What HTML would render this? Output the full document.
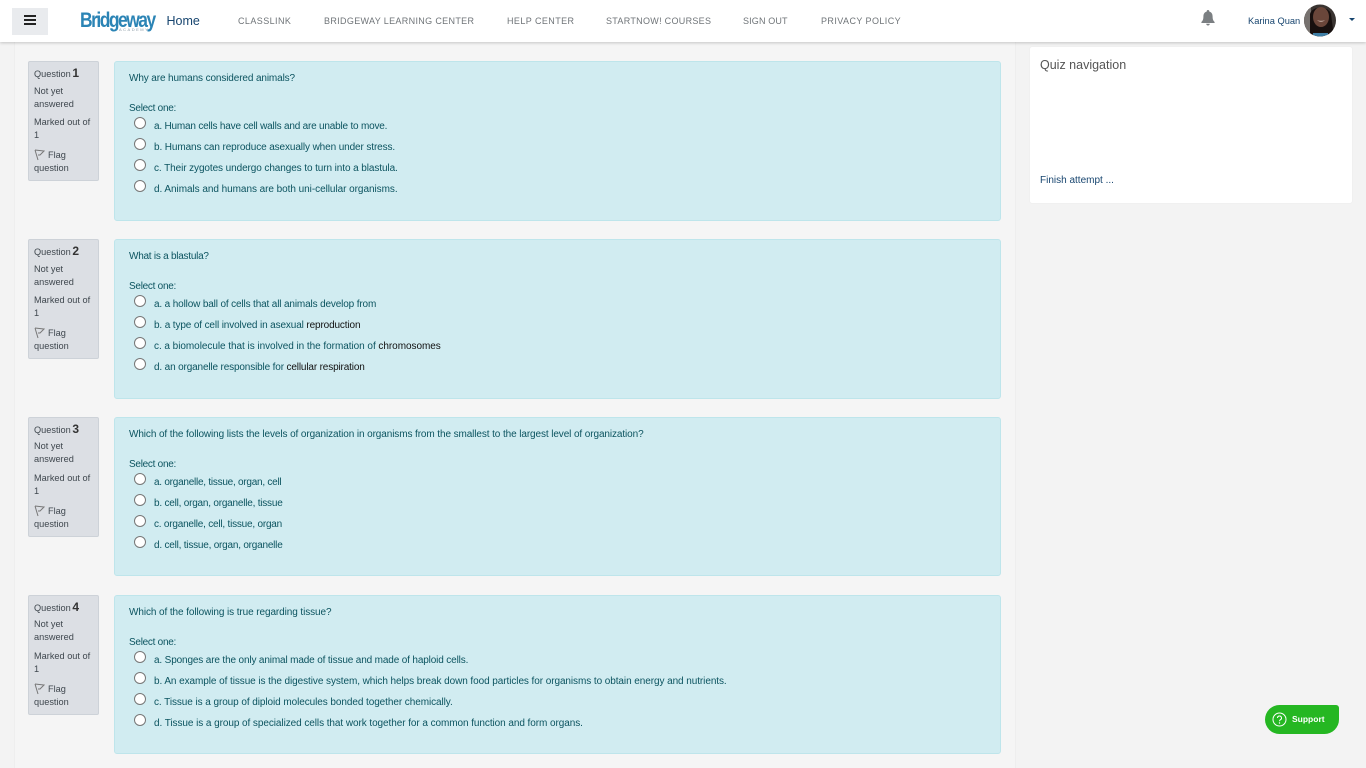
<!DOCTYPE html>
<html lang="en"><head><meta charset="utf-8"><title>Quiz</title>
<style>
html,body{margin:0;padding:0;width:1366px;height:768px;overflow:hidden;background:#f3f3f3;font-family:"Liberation Sans",sans-serif;}
.a,.t{position:absolute;white-space:nowrap}
.t{font-size:10px;letter-spacing:-.09px;line-height:14px;color:#0c5460;margin-top:3px}
.t span{color:#111}
.s{letter-spacing:-.27px}
.i{color:#3f474e;font-size:9.2px;line-height:13px;margin-top:1px}
.i b{font-size:12px;color:#333;margin-left:-1px}
.i i{font-style:normal;margin-left:14px}
.n{font-size:9px;letter-spacing:.42px;color:#6f7478;line-height:14px;top:14px}
.info{position:absolute;left:28px;width:69px;height:118px;background:#dcdfe4;border:1px solid #cdd2d8;border-radius:2px}
.box{position:absolute;left:114px;width:885px;background:#d1ecf1;border:1px solid #bee5eb;border-radius:3px}
.r{position:absolute;left:134px;width:10px;height:10px;border:1px solid #777;border-radius:50%;background:#fff;margin-top:-1px}
</style></head><body>
<div class="a" style="left:14px;top:42px;width:1000px;height:726px;background:#f5f5f5;border-left:1px solid #eeeeee;border-right:1px solid #eeeeee"></div>
<div class="a" style="left:0;top:0;width:1366px;height:42px;background:#fff;box-shadow:0 1px 3px rgba(0,0,0,.2)"></div>
<div class="a" style="left:12px;top:8px;width:36px;height:27px;background:#e9ebee"></div>
<div class="a" style="left:24px;top:15px;width:12px;height:2px;background:#222;box-shadow:0 4px 0 #222,0 8px 0 #222"></div>
<div class="a" style="left:80px;top:9px;font:bold 21px/24px 'Liberation Sans',sans-serif;color:#2b84b5;letter-spacing:-1.8px;transform-origin:0 0;transform:scaleX(.83)">Bridgeway</div>
<div class="a" style="left:119px;top:27px;font-size:4px;line-height:5px;letter-spacing:1.500px;color:#8a9aa5">ACADEMY</div>
<div class="a" style="left:166.500px;top:13px;font-size:12.500px;line-height:17px;color:#17456f">Home</div>
<div class="a n" style="left:238px">CLASSLINK</div>
<div class="a n" style="left:324px;letter-spacing:.34px">BRIDGEWAY LEARNING CENTER</div>
<div class="a n" style="left:507px">HELP CENTER</div>
<div class="a n" style="left:606px;letter-spacing:.3px">STARTNOW! COURSES</div>
<div class="a n" style="left:743px;letter-spacing:.15px">SIGN OUT</div>
<div class="a n" style="left:821px">PRIVACY POLICY</div>
<svg class="a" style="left:1201px;top:10px" width="14" height="16" viewBox="0 0 14 16"><path fill="#7b7f82" d="M7 0a1.3 1.3 0 0 1 1.3 1.6C10.6 2.2 11.6 4 11.6 6.5c0 3 .7 4.300 2 5.500V13H.4v-1c1.300-1.200 2-2.500 2-5.500 0-2.500 1-4.300 3.300-4.900A1.300 1.300 0 0 1 7 0zM5.200 13.800h3.600A1.900 1.900 0 0 1 7 15.500a1.900 1.900 0 0 1-1.800-1.700z"/></svg>
<div class="a" style="left:1248px;top:14px;font-size:9.300px;line-height:14px;color:#17456f">Karina Quan</div>
<svg class="a" style="left:1304px;top:4px" width="32" height="33" viewBox="0 0 32 33"><defs><clipPath id="c"><circle cx="16" cy="16.500" r="16"/></clipPath></defs><g clip-path="url(#c)"><rect width="32" height="33" fill="#3a3431"/><rect x="0" y="0" width="7" height="33" fill="#77726f"/><path d="M6 33V10C8 2 24 1 27 10L30 33z" fill="#17100f"/><ellipse cx="17" cy="13" rx="8" ry="10" fill="#6a463a"/><path d="M13 16q4 4 8 0q-4 1.500-8 0z" fill="#b39a90"/><rect x="9" y="29" width="15" height="4" fill="#3f7fa6"/></g></svg>
<div class="a" style="left:1349px;top:18px;border:3px solid transparent;border-top-color:#17456f;border-bottom:0"></div>
<div class="a" style="left:1030px;top:47px;width:322px;height:156px;background:#fff;border-radius:2px;box-shadow:0 0 1px rgba(0,0,0,.1)"></div>
<div class="a" style="left:1040px;top:57px;font-size:12.500px;line-height:16px;color:#555">Quiz navigation</div>
<div class="a" style="left:1040px;top:174px;font-size:10px;line-height:14px;color:#17456f">Finish attempt ...</div>
<div class="a" style="left:1265px;top:705px;width:74px;height:29px;background:#25b722;border-radius:15px 3px 15px 15px"></div>
<svg class="a" style="left:1272px;top:712px" width="15" height="15" viewBox="0 0 15 15"><circle cx="7.500" cy="7.500" r="6.500" fill="none" stroke="#fff"/><path d="M5.500 6a2 2 0 1 1 3 1.700c-.7.400-1 .8-1 1.600" fill="none" stroke="#fff"/><circle cx="7.500" cy="11" r=".7" fill="#fff"/></svg>
<div class="a" style="left:1292px;top:712px;font:bold 8.500px/14px 'Liberation Sans',sans-serif;color:#fff">Support</div>

<div class="info" style="top:61px"></div><div class="box" style="top:61px;height:158px"></div>
<div class="info" style="top:239px"></div><div class="box" style="top:239px;height:158px"></div>
<div class="info" style="top:417px"></div><div class="box" style="top:417px;height:157px"></div>
<div class="info" style="top:595px"></div><div class="box" style="top:595px;height:157px"></div>

<div class="a i" style="left:34px;top:66px">Question <b>1</b></div>
<div class="a i" style="left:34px;top:84px">Not yet<br>answered</div>
<div class="a i" style="left:34px;top:115px">Marked out of<br>1</div>
<svg class="a" style="left:34px;top:149px" width="11" height="12" viewBox="0 0 11 12"><path d="M1 1l9 1-4 4-2 0M1 1l3 10" fill="none" stroke="#777"/></svg>
<div class="a i" style="left:34px;top:148px"><i>Flag</i><br>question</div>
<div class="a i" style="left:34px;top:244px">Question <b>2</b></div>
<div class="a i" style="left:34px;top:262px">Not yet<br>answered</div>
<div class="a i" style="left:34px;top:293px">Marked out of<br>1</div>
<svg class="a" style="left:34px;top:327px" width="11" height="12" viewBox="0 0 11 12"><path d="M1 1l9 1-4 4-2 0M1 1l3 10" fill="none" stroke="#777"/></svg>
<div class="a i" style="left:34px;top:326px"><i>Flag</i><br>question</div>
<div class="a i" style="left:34px;top:422px">Question <b>3</b></div>
<div class="a i" style="left:34px;top:439px">Not yet<br>answered</div>
<div class="a i" style="left:34px;top:471px">Marked out of<br>1</div>
<svg class="a" style="left:34px;top:505px" width="11" height="12" viewBox="0 0 11 12"><path d="M1 1l9 1-4 4-2 0M1 1l3 10" fill="none" stroke="#777"/></svg>
<div class="a i" style="left:34px;top:504px"><i>Flag</i><br>question</div>
<div class="a i" style="left:34px;top:600px">Question <b>4</b></div>
<div class="a i" style="left:34px;top:617px">Not yet<br>answered</div>
<div class="a i" style="left:34px;top:649px">Marked out of<br>1</div>
<svg class="a" style="left:34px;top:683px" width="11" height="12" viewBox="0 0 11 12"><path d="M1 1l9 1-4 4-2 0M1 1l3 10" fill="none" stroke="#777"/></svg>
<div class="a i" style="left:34px;top:682px"><i>Flag</i><br>question</div>

<div class="t" style="left:129px;top:69px;letter-spacing:-.12px">Why are humans considered animals?</div>
<div class="t s" style="left:129px;top:99px">Select one:</div>
<div class="r" style="top:118px"></div><div class="t" style="left:154px;top:117px;letter-spacing:-.2px">a. Human cells have cell walls and are unable to move.</div>
<div class="r" style="top:139px"></div><div class="t" style="left:154px;top:138px;letter-spacing:-.11px">b. Humans can reproduce asexually when under stress.</div>
<div class="r" style="top:160px"></div><div class="t" style="left:154px;top:159px">c. Their zygotes undergo changes to turn into a blastula.</div>
<div class="r" style="top:181px"></div><div class="t" style="left:154px;top:180px;letter-spacing:-.05px">d. Animals and humans are both uni-cellular organisms.</div>

<div class="t" style="left:129px;top:247px;letter-spacing:-.25px">What is a blastula?</div>
<div class="t s" style="left:129px;top:277px">Select one:</div>
<div class="r" style="top:296px"></div><div class="t" style="left:154px;top:295px;letter-spacing:-.145px">a. a hollow ball of cells that all animals develop from</div>
<div class="r" style="top:317px"></div><div class="t" style="left:154px;top:316px;letter-spacing:-.13px">b. a type of cell involved in asexual <span>reproduction</span></div>
<div class="r" style="top:338px"></div><div class="t" style="left:154px;top:337px;letter-spacing:-.044px">c. a biomolecule that is involved in the formation of <span>chromosomes</span></div>
<div class="r" style="top:359px"></div><div class="t" style="left:154px;top:358px;letter-spacing:-.15px">d. an organelle responsible for <span>cellular respiration</span></div>

<div class="t" style="left:129px;top:425px;letter-spacing:-.1px">Which of the following lists the levels of organization in organisms from the smallest to the largest level of organization?</div>
<div class="t s" style="left:129px;top:455px">Select one:</div>
<div class="r" style="top:474px"></div><div class="t" style="left:154px;top:473px;letter-spacing:-.25px">a. organelle, tissue, organ, cell</div>
<div class="r" style="top:495px"></div><div class="t" style="left:154px;top:494px;letter-spacing:-.215px">b. cell, organ, organelle, tissue</div>
<div class="r" style="top:516px"></div><div class="t" style="left:154px;top:515px;letter-spacing:-.215px">c. organelle, cell, tissue, organ</div>
<div class="r" style="top:537px"></div><div class="t" style="left:154px;top:536px;letter-spacing:-.215px">d. cell, tissue, organ, organelle</div>

<div class="t" style="left:129px;top:603px">Which of the following is true regarding tissue?</div>
<div class="t s" style="left:129px;top:633px">Select one:</div>
<div class="r" style="top:652px"></div><div class="t" style="left:154px;top:651px;letter-spacing:-.145px">a. Sponges are the only animal made of tissue and made of haploid cells.</div>
<div class="r" style="top:673px"></div><div class="t" style="left:154px;top:672px;letter-spacing:-.075px">b. An example of tissue is the digestive system, which helps break down food particles for organisms to obtain energy and nutrients.</div>
<div class="r" style="top:694px"></div><div class="t" style="left:154px;top:693px;letter-spacing:-.075px">c. Tissue is a group of diploid molecules bonded together chemically.</div>
<div class="r" style="top:715px"></div><div class="t" style="left:154px;top:714px;letter-spacing:-.07px">d. Tissue is a group of specialized cells that work together for a common function and form organs.</div>
</body></html>
